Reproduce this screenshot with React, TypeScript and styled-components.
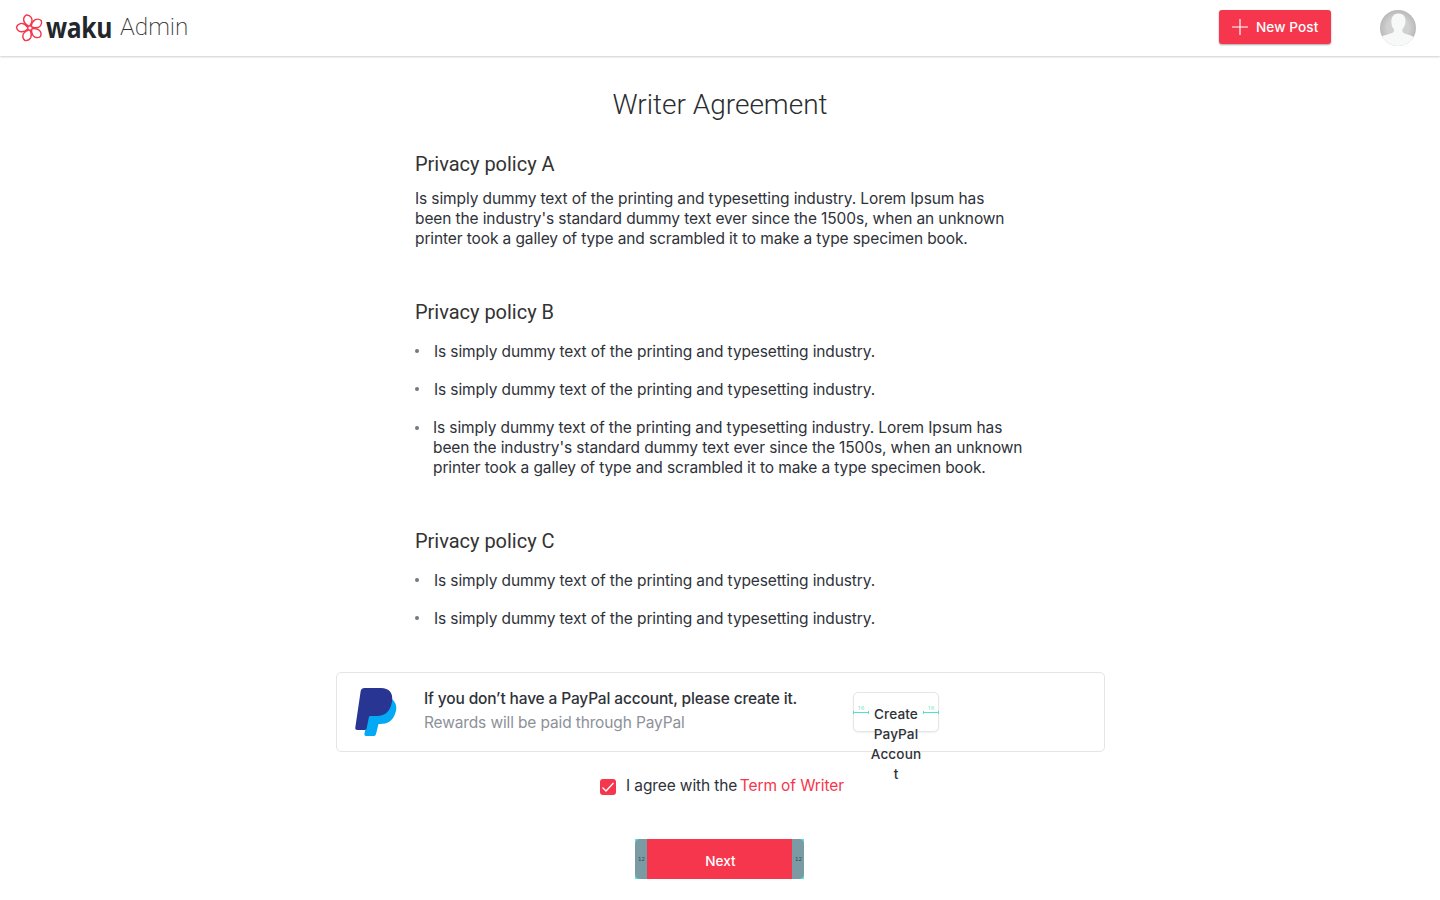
import React from "react";
import styled, { createGlobalStyle } from "styled-components";

const Global = createGlobalStyle`
  * { box-sizing: border-box; }
  body { margin: 0; background: #fff; color: #2f3239; font-family: Inter, sans-serif; }
  h1, h2, p, ul { margin: 0; padding: 0; font-weight: 400; }
`;

const Page = styled.div`
  height: 900px;
  display: flex;
  flex-direction: column;
  overflow: hidden;
`;

const Header = styled.header`
  height: 56px;
  flex: none;
  display: flex;
  align-items: center;
  padding: 0 24px 0 15px;
  box-shadow: 0 1px 2px rgba(0, 0, 0, 0.2);
`;

const Brand = styled.div`
  display: flex;
  align-items: center;
  flex: 1;
  height: 56px;
`;

const Wordmark = styled.span`
  width: 66px;
  font: 700 28px/52px "Open Sans", sans-serif;
  padding-bottom: 3px;
  letter-spacing: -0.4px;
  color: #21272a;
  margin-left: 2px;
  transform: scaleX(0.88);
  transform-origin: left;
`;

const Section = styled.span`
  font: 200 24.3px/52px Roboto, sans-serif;
  padding-bottom: 2px;
  color: #333;
  margin-left: 8px;
`;

const NewPost = styled.button`
  width: 112px;
  height: 34px;
  margin: 0 49px 2px 0;
  border: 0;
  border-radius: 3px;
  background: #f5364c;
  box-shadow: 0 1px 2px rgba(0, 0, 0, 0.35);
  color: #fff;
  display: flex;
  align-items: center;
  gap: 8px;
  padding: 0 0 0 13px;
  white-space: nowrap;
  font: 500 13.6px/20px Inter, sans-serif;
  letter-spacing: 0.08px;
`;

const Title = styled.h1`
  margin-top: 28px;
  text-align: center;
  font: 300 28px/41px Roboto, sans-serif;
  height: 40px;
  color: #2a2d30;
`;

const Policies = styled.main`
  width: 610px;
  margin: 28px 0 0 415px;
  display: flex;
  flex-direction: column;
  gap: 52px;
`;

const Heading = styled.h2`
  font: 400 20px/24px Roboto, sans-serif;
  letter-spacing: -0.02px;
  color: #333;
`;

const Body = styled.p`
  && {
    padding-top: 1px;
    margin-bottom: -1px;
  }
  font-size: 15.5px;
  line-height: 20px;
  letter-spacing: -0.11px;
  white-space: nowrap;
`;

const Paragraph = styled(Body)`
  margin-top: 12px;
`;

const List = styled.ul`
  list-style: none;
  margin-top: 17px;
  display: flex;
  flex-direction: column;
  gap: 18px;
`;

const Item = styled.li<{ $long: boolean }>`
  display: flex;
  gap: ${(p) => (p.$long ? 14 : 15)}px;
  &::before {
    content: "";
    flex: none;
    width: 4px;
    height: 4px;
    margin-top: ${(p) => (p.$long ? 9 : 8)}px;
    border-radius: 50%;
    background: #6f7a83;
  }
`;

const PayCard = styled.section`
  width: 769px;
  height: 80px;
  flex: none;
  margin: 44px 0 0 336px;
  border: 1px solid #e4e5e6;
  border-radius: 5px;
  display: flex;
  padding: 15px 0 0 18px;
`;

const PayText = styled.div`
  width: 429px;
  margin-left: 27px;
`;

const PayTitle = styled.p`
  font-size: 15.5px;
  font-weight: 500;
  line-height: 21px;
  letter-spacing: -0.15px;
  white-space: nowrap;
`;

const PayNote = styled(Body)`
  color: #8d9199;
  letter-spacing: -0.14px;
  margin-top: 3px;
`;

const CreateButton = styled.button`
  width: 86px;
  height: 40px;
  margin-top: 4px;
  padding: 11px 0 0;
  border: 1px solid #e4e5e6;
  border-radius: 5px;
  background: #fff;
  box-shadow: 0 1px 2px rgba(0, 0, 0, 0.06);
  display: flex;
  justify-content: space-between;
  align-items: flex-start;
  color: #2f3239;
`;

const CreateLabel = styled.span`
  width: 52px;
  flex: none;
  font: 500 13.6px/20px Inter, sans-serif;
  letter-spacing: 0.1px;
  text-align: center;
`;

const Spacer = styled.span`
  width: 16px;
  margin: 1px -1px 0;
  display: flex;
  flex-direction: column;
  align-items: center;
  font: 400 5.5px/6px "Open Sans", sans-serif;
  color: #50e3c2;
`;

const Agreement = styled.label`
  display: flex;
  align-items: flex-start;
  height: 20px;
  margin: 23px 0 0 600px;
`;

const CheckBox = styled.span`
  width: 16px;
  height: 16px;
  margin: 4px 10px 0 0;
  border-radius: 3px;
  background: #f5364c;
  display: flex;
`;

const Terms = styled.a`
  color: #f5364c;
  margin-left: 2.5px;
`;

const Next = styled.button`
  width: 169px;
  height: 40px;
  flex: none;
  margin: 44px 0 0 635px;
  border: 0;
  padding: 0;
  background: #50e3dc;
  display: flex;
  color: #fff;
`;

const NextLabel = styled.span`
  flex: 1;
  background: #f5364c;
  font: 500 13.6px/44px Inter, sans-serif;
  text-align: center;
  height: 40px;
  padding-left: 2px;
`;

const NextEdge = styled.span<{ $side: "left" | "right" }>`
  width: 12px;
  height: 40px;
  background: #7b9ba4;
  border-radius: ${(p) => (p.$side === "left" ? "5px 0 0 5px" : "0 5px 5px 0")};
  font: 400 5.5px/40px "DejaVu Sans", sans-serif;
  color: #34474d;
  text-align: center;
  padding-left: 1px;
`;

const Flower = () => (
  <svg width="29" height="30" viewBox="0 0 29 30" fill="none" stroke="#f5364c" strokeWidth="1.4">
    {[0, 72, 144, 216, 288].map((a) => (
      <path key={a} transform={`rotate(${a} 15 15)`} d="M12.600 14.200C9.800 10.600 7.500 10 5.300 10.600C3.300 11.200 1.900 12.700 1.500 14.300C2.100 16.800 4 18.400 6.200 18.700C8.500 18.900 10.500 18 12.800 15.900" />
    ))}
    <circle cx="15" cy="15" r="2.300" />
  </svg>
);

const Avatar = () => (
  <svg width="36" height="36" viewBox="0 0 36 36">
    <defs>
      <clipPath id="avatar"><circle cx="18" cy="18" r="18" /></clipPath>
      <radialGradient id="shade">
        <stop offset="0.6" stopColor="#d0d0d0" />
        <stop offset="1" stopColor="#b9b9b9" />
      </radialGradient>
    </defs>
    <g clipPath="url(#avatar)">
      <rect width="36" height="36" fill="url(#shade)" />
      <path d="M18.500 3.500c4.800 0 7.200 3.200 7 8-.1 3-1.200 5.800-3 7.700-.6 2 0 3.400 2 4.200 4.500 1.500 8.500 2 10.500 5V37H1V27c2.500-2 6.500-2.300 10.500-3.800 2.200-.8 3-2.200 2.200-4.200-1.700-2-2.300-4.500-2.300-7.500 0-5 2.500-8 7.100-8z" fill="#f7f9f8" />
    </g>
  </svg>
);

const PayPal = () => (
  <svg width="42" height="48" viewBox="0 0 42 48">
    <path d="M37 11C41.500 15 42.500 20 40 26c-2.500 7-7.500 10-15 10h-1.500L21 46c-.4 1.400-1.200 2-2.500 2h-7c-1.600 0-2.400-1-2-2.500L14 24z" fill="#03a9f4" />
    <path d="M9.500 0H26c8 0 12.500 5 11 13.500C35.500 23 30.500 28 22 28h-6.500c-1 0-1.500.5-1.700 1.500L11.700 40c-.3 1.400-1 2-2.300 2H2.300C.8 42 0 41 .3 39.500L5.700 3C6.100 1 7.500 0 9.500 0z" fill="#283593" />
  </svg>
);

const Measure = () => (
  <Spacer>
    16
    <svg width="16" height="3"><path d="M0 1.500H16M.5 0V3M15.500 0V3" stroke="#50e3c2" /></svg>
  </Spacer>
);

const LINE = "Is simply dummy text of the printing and typesetting industry.";
const LONG = (
  <>
    {LINE} Lorem Ipsum has<br />
    been the industry's standard dummy text ever since the 1500s, when an unknown<br />
    printer took a galley of type and scrambled it to make a type specimen book.
  </>
);

const Bullet = ({ long = false }: { long?: boolean }) => (
  <Item $long={long}>
    <Body>{long ? LONG : LINE}</Body>
  </Item>
);

export default function App() {
  return (
    <Page>
      <Global />
      <Header>
        <Brand><Flower /><Wordmark>waku</Wordmark><Section>Admin</Section></Brand>
        <NewPost>
          <svg width="16" height="16" stroke="#fff" strokeWidth="1.2"><path d="M0 8H16M8 0V16" /></svg>
          New Post
        </NewPost>
        <Avatar />
      </Header>
      <Title>Writer Agreement</Title>
      <Policies>
        <section><Heading>Privacy policy A</Heading><Paragraph>{LONG}</Paragraph></section>
        <section><Heading>Privacy policy B</Heading><List><Bullet /><Bullet /><Bullet long /></List></section>
        <section><Heading>Privacy policy C</Heading><List><Bullet /><Bullet /></List></section>
      </Policies>
      <PayCard>
        <PayPal />
        <PayText>
          <PayTitle>If you don’t have a PayPal account, please create it.</PayTitle>
          <PayNote>Rewards will be paid through PayPal</PayNote>
        </PayText>
        <CreateButton><Measure /><CreateLabel>Create PayPal Accoun<br />t</CreateLabel><Measure /></CreateButton>
      </PayCard>
      <Agreement>
        <CheckBox><svg width="16" height="16" fill="none" stroke="#fff" strokeWidth="1.3"><path d="M2.500 8.500L6 12L13.500 4" /></svg></CheckBox>
        <Body as="span">I agree with the</Body>
        <Body as="span"><Terms>Term of Writer</Terms></Body>
      </Agreement>
      <Next><NextEdge $side="left">12</NextEdge><NextLabel>Next</NextLabel><NextEdge $side="right">12</NextEdge></Next>
    </Page>
  );
}
